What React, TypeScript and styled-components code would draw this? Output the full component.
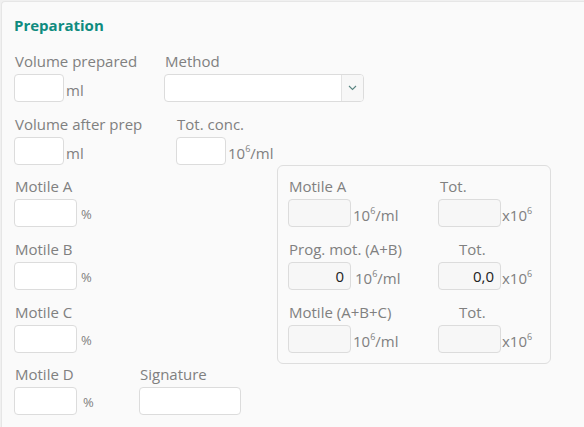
import { FC, ReactNode, Fragment } from 'react';
import styled, { createGlobalStyle } from 'styled-components';

const GlobalStyle = createGlobalStyle`
    html, body {
        margin: 0;
        padding: 0;
        background: #f0f0f0;
        overflow: hidden;
        font-family: 'Open Sans', 'Noto Sans', sans-serif;
    }
    #root {
        padding: 1px 0 0 1px;
    }
`;

const Panel = styled.section`
    box-sizing: border-box;
    height: 440px;
    padding: 13px 0 0 12px;
    background: #fafafa;
    border: 1px solid #e6e6e6;
    border-right: none;
    border-bottom: none;
    border-top-left-radius: 4px;
`;

const Title = styled.h2`
    margin: 0 0 16px;
    font-size: 15px;
    line-height: 20px;
    font-weight: 700;
    color: #0f8b7f;
`;

const Row = styled.div<{ $gap?: number }>`
    display: flex;
    align-items: flex-start;
    margin-bottom: ${(p) => p.$gap ?? 0}px;
`;

const FieldBox = styled.div<{ $width?: number }>`
    display: flex;
    flex-direction: column;
    width: ${(p) => (p.$width ? `${p.$width}px` : 'auto')};
    flex-shrink: 0;
`;

const Label = styled.label<{ $indent?: number }>`
    display: block;
    margin: 0 0 3px ${(p) => p.$indent ?? 1}px;
    font-size: 15px;
    line-height: 20px;
    color: #808080;
    white-space: nowrap;
`;

const Control = styled.div`
    display: flex;
    align-items: flex-end;
`;

const Input = styled.input<{ $width: number; $muted?: boolean }>`
    box-sizing: border-box;
    width: ${(p) => p.$width}px;
    height: 28px;
    margin: 0;
    padding: 0 6px;
    border: 1px solid #dcdcdc;
    border-radius: 4px;
    background: ${(p) => (p.$muted ? '#f7f7f7' : '#ffffff')};
    font-family: inherit;
    font-size: 15px;
    color: #222;
    text-align: right;
    outline: none;
`;

const Unit = styled.span<{ $offset?: number; $small?: boolean }>`
    margin-left: ${(p) => p.$offset ?? 2}px;
    padding-bottom: ${(p) => (p.$small ? 3 : 2)}px;
    font-size: ${(p) => (p.$small ? 13 : 15)}px;
    line-height: 20px;
    color: #808080;
    white-space: nowrap;
`;

const Sup = styled.sup`
    font-size: 9px;
    line-height: 0;
    vertical-align: 7px;
`;

const Select = styled.div`
    box-sizing: border-box;
    display: flex;
    width: 200px;
    height: 28px;
    border: 1px solid #dcdcdc;
    border-radius: 4px;
    background: #fff;
    overflow: hidden;
`;

const SelectValue = styled.div`
    flex: 1;
`;

const SelectAddon = styled.div`
    display: flex;
    align-items: center;
    justify-content: center;
    width: 21px;
    border-left: 1px solid #e3e3e3;
    background: #f7f7f7;
`;

const Section = styled.div`
    display: grid;
    grid-template-columns: 263px 274px;
    align-items: start;
`;

const Column = styled.div`
    display: flex;
    flex-direction: column;
    gap: 12px;
    padding-top: 11px;
`;

const CalcBox = styled.div`
    box-sizing: border-box;
    display: grid;
    grid-template-columns: 150px 1fr;
    row-gap: 12px;
    padding: 10px;
    border: 1px solid #dedede;
    border-radius: 6px;
`;

const Million = () => (
    <>
        10<Sup>6</Sup>/ml
    </>
);

const Times = () => (
    <>
        x10<Sup>6</Sup>
    </>
);

type FieldProps = {
    label: string;
    width?: number;
    indent?: number;
    children: ReactNode;
};

const Field: FC<FieldProps> = ({ label, width, indent, children }) => (
    <FieldBox $width={width}>
        <Label $indent={indent}>{label}</Label>
        <Control>{children}</Control>
    </FieldBox>
);

const Chevron = () => (
    <svg width="9" height="6" viewBox="0 0 9 6">
        <polyline points="1,1 4.5,4.5 8,1" fill="none" stroke="#5a8582" strokeWidth="1.1" />
    </svg>
);

const calcRows = [
    { label: 'Motile A', value: '', total: '', totIndent: 2, gap: 2 },
    { label: 'Prog. mot. (A+B)', value: '0', total: '0,0', totIndent: 21, gap: 4 },
    { label: 'Motile (A+B+C)', value: '', total: '', totIndent: 21, gap: 2 },
];

const App: FC = () => (
    <>
        <GlobalStyle />
        <Panel>
            <Title>Preparation</Title>
            <Row $gap={12}>
                <Field label="Volume prepared" width={150}>
                    <Input $width={50} />
                    <Unit>ml</Unit>
                </Field>
                <Field label="Method">
                    <Select>
                        <SelectValue />
                        <SelectAddon>
                            <Chevron />
                        </SelectAddon>
                    </Select>
                </Field>
            </Row>
            <Row>
                <Field label="Volume after prep" width={162}>
                    <Input $width={50} />
                    <Unit>ml</Unit>
                </Field>
                <Field label="Tot. conc.">
                    <Input $width={50} />
                    <Unit $offset={2}>
                        <Million />
                    </Unit>
                </Field>
            </Row>
            <Section>
                <Column>
                    {['Motile A', 'Motile B', 'Motile C'].map((name) => (
                        <Field key={name} label={name}>
                            <Input $width={63} />
                            <Unit $offset={4} $small>
                                %
                            </Unit>
                        </Field>
                    ))}
                </Column>
                <CalcBox>
                    {calcRows.map((row) => (
                        <Fragment key={row.label}>
                            <Field label={row.label}>
                                <Input $width={63} $muted value={row.value} readOnly />
                                <Unit $offset={row.gap}>
                                    <Million />
                                </Unit>
                            </Field>
                            <Field label="Tot." indent={row.totIndent}>
                                <Input $width={63} $muted value={row.total} readOnly />
                                <Unit $offset={1}>
                                    <Times />
                                </Unit>
                            </Field>
                        </Fragment>
                    ))}
                </CalcBox>
            </Section>
            <Row>
                <Field label="Motile D" width={125}>
                    <Input $width={63} />
                    <Unit $offset={6} $small>
                        %
                    </Unit>
                </Field>
                <Field label="Signature">
                    <Input $width={102} />
                </Field>
            </Row>
        </Panel>
    </>
);

export default App;
